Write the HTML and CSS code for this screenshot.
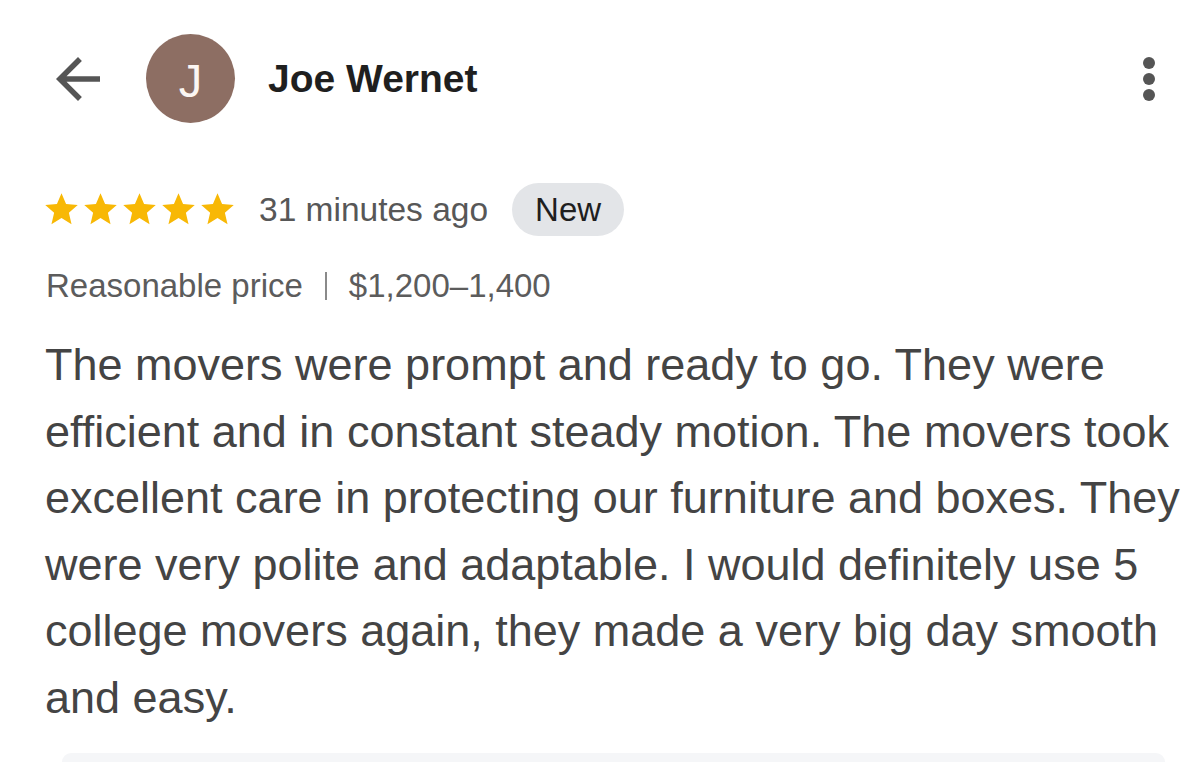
FILE: index.html
```html
<!DOCTYPE html>
<html lang="en">
<head>
<meta charset="utf-8">
<title>Review</title>
<link rel="stylesheet" href="styles.css">
</head>
<body>
<div class="page">
  <header class="header">
    <svg class="back" viewBox="0 0 24 24" aria-hidden="true"><path d="M20 11H7.83l5.59-5.59L12 4l-8 8 8 8 1.41-1.41L7.83 13H20v-2z"/></svg>
    <div class="avatar">J</div>
    <div class="name">Joe Wernet</div>
    <div class="kebab" aria-hidden="true"><span></span><span></span><span></span></div>
  </header>

  <div class="rating-row">
    <div class="stars">
      <svg viewBox="0 0 24 24"><path d="M12 17.27L18.18 21l-1.64-7.03L22 9.24l-7.19-.61L12 2 9.19 8.63 2 9.24l5.46 4.73L5.82 21z"/></svg>
      <svg viewBox="0 0 24 24"><path d="M12 17.27L18.18 21l-1.64-7.03L22 9.24l-7.19-.61L12 2 9.19 8.63 2 9.24l5.46 4.73L5.82 21z"/></svg>
      <svg viewBox="0 0 24 24"><path d="M12 17.27L18.18 21l-1.64-7.03L22 9.24l-7.19-.61L12 2 9.19 8.63 2 9.24l5.46 4.73L5.82 21z"/></svg>
      <svg viewBox="0 0 24 24"><path d="M12 17.27L18.18 21l-1.64-7.03L22 9.24l-7.19-.61L12 2 9.19 8.63 2 9.24l5.46 4.73L5.82 21z"/></svg>
      <svg viewBox="0 0 24 24"><path d="M12 17.27L18.18 21l-1.64-7.03L22 9.24l-7.19-.61L12 2 9.19 8.63 2 9.24l5.46 4.73L5.82 21z"/></svg>
    </div>
    <span class="time">31 minutes ago</span>
    <span class="pill">New</span>
  </div>

  <div class="meta">
    <span>Reasonable price</span><span class="sep"></span><span>$1,200–1,400</span>
  </div>

  <p class="body">The movers were prompt and ready to go. They were<br>efficient and in constant steady motion. The movers took<br>excellent care in protecting our furniture and boxes. They<br>were very polite and adaptable. I would definitely use 5<br>college movers again, they made a very big day smooth<br>and easy.</p>

  <div class="next-card"></div>
</div>
</body>
</html>
```

FILE: styles.css
```css
html, body {
  margin: 0;
  padding: 0;
  background: #ffffff;
}

body {
  width: 1200px;
  height: 762px;
  overflow: hidden;
  font-family: "Liberation Sans", Arial, sans-serif;
}

.page {
  padding: 34px 45px 0 45px;
}

.header {
  display: flex;
  align-items: center;
  height: 89px;
}

.back {
  width: 66px;
  height: 66px;
  fill: #555555;
  flex: none;
}

.avatar {
  width: 89px;
  height: 89px;
  border-radius: 50%;
  background: #8d6e63;
  color: #fbf6f3;
  font-size: 47px;
  line-height: 1;
  padding-top: 3px;
  box-sizing: border-box;
  display: flex;
  align-items: center;
  justify-content: center;
  margin-left: 35px;
  flex: none;
}

.name {
  margin-left: 33px;
  font-size: 39px;
  font-weight: bold;
  color: #1f1f1f;
  flex: 1;
}

.kebab {
  display: flex;
  flex-direction: column;
  gap: 4px;
}

.kebab span {
  width: 12px;
  height: 12px;
  border-radius: 50%;
  background: #555555;
}

.rating-row {
  display: flex;
  align-items: center;
  margin-top: 60px;
  height: 53px;
}

.stars {
  display: flex;
  margin-left: -3px;
}

.stars svg {
  width: 39px;
  height: 39px;
  fill: #f8b805;
}

.time {
  margin-left: 22px;
  font-size: 33.5px;
  color: #575757;
}

.pill {
  margin-left: 24px;
  height: 53px;
  padding: 0 23px;
  border-radius: 27px;
  background: #e3e5e8;
  color: #1f1f1f;
  font-size: 33px;
  display: flex;
  align-items: center;
}

.meta {
  display: flex;
  align-items: center;
  margin-top: 30px;
  height: 40px;
  font-size: 33px;
  color: #5c5c5c;
  padding-left: 1px;
}

.sep {
  width: 2px;
  height: 28px;
  background: #8a8a8a;
  margin: 0 22px;
}

.body {
  margin: 26px 0 0 0;
  font-size: 45px;
  line-height: 66.6px;
  color: #444444;
  white-space: nowrap;
}

.next-card {
  margin: 21px -10px 0 17px;
  height: 9px;
  border-radius: 26px 26px 0 0;
  background: #f5f6f8;
}
```
